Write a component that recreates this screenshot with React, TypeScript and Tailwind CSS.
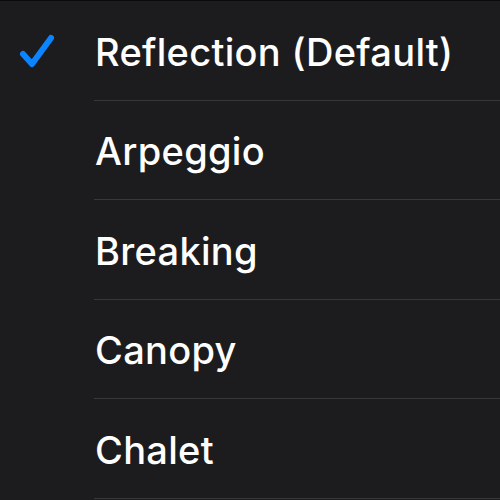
import React from "react";

const items = ["Reflection (Default)", "Arpeggio", "Breaking", "Canopy", "Chalet"];

export default function App() {
  return (
    <div className="w-[500px] h-[500px] overflow-hidden bg-[#1c1c1e] flex flex-col" style={{ fontFamily: "Inter, 'Noto Sans', sans-serif" }}>
      <div className="h-[1px] bg-[#0a0a0a] shrink-0" />
      {items.map((label, i) => (
        <div key={label} className="flex h-[99.5px] shrink-0">
          <div className="w-[94px] shrink-0 flex items-center justify-center pl-[2px]">
            {i === 0 && (
              <svg width="36" height="36" viewBox="0 0 36 36" className="ml-[-22px] mt-[2px]">
                <path d="M4 20 L13 30 L32 4" fill="none" stroke="#0a84ff" strokeWidth="6" strokeLinecap="round" strokeLinejoin="round" />
              </svg>
            )}
          </div>
          <div className="flex-1 flex items-center border-b border-[#38383a] pl-[1px]">
            <span className="text-white font-medium text-[38px] tracking-[0.3px] leading-none mt-[3px]">{label}</span>
          </div>
        </div>
      ))}
    </div>
  );
}
